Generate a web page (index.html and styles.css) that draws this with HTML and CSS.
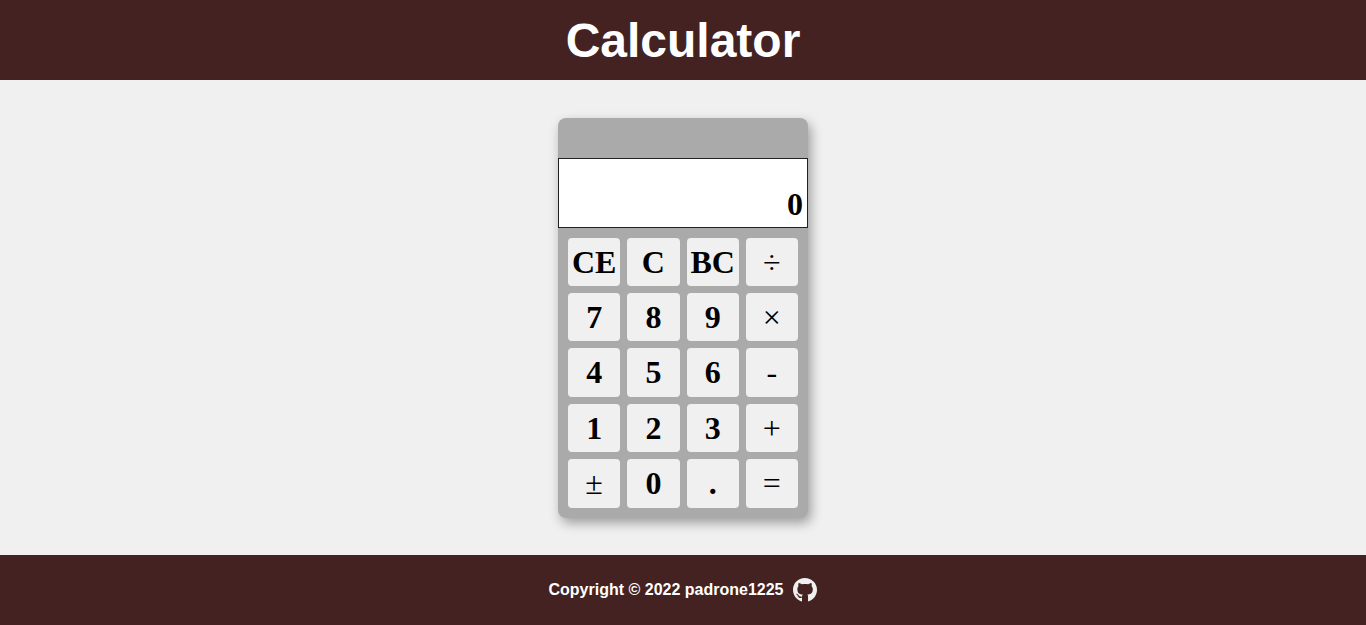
FILE: index.html
```html
<!DOCTYPE html>
<html lang="en">
<head>
<meta charset="utf-8">
<title>Calculator</title>
<link rel="stylesheet" href="styles.css">
</head>
<body>
<header class="header"><h1 class="title">Calculator</h1></header>
<main class="main">
  <section class="calculator" aria-label="Calculator">
    <output class="display">0</output>
    <div class="keys">
      <button class="key">CE</button>
      <button class="key">C</button>
      <button class="key">BC</button>
      <button class="key operator">÷</button>
      <button class="key">7</button>
      <button class="key">8</button>
      <button class="key">9</button>
      <button class="key operator">×</button>
      <button class="key">4</button>
      <button class="key">5</button>
      <button class="key">6</button>
      <button class="key operator">-</button>
      <button class="key">1</button>
      <button class="key">2</button>
      <button class="key">3</button>
      <button class="key operator">+</button>
      <button class="key operator">±</button>
      <button class="key">0</button>
      <button class="key">.</button>
      <button class="key operator">=</button>
    </div>
  </section>
</main>
<footer class="footer">
  <p class="copyright">Copyright © 2022 padrone1225</p>
  <a class="github" href="https://github.com/padrone1225" aria-label="GitHub">
    <svg class="github-icon" viewBox="0 0 496 496" aria-hidden="true"><path fill="currentColor" transform="translate(0 -8)" d="M165.9 397.4c0 2-2.3 3.6-5.2 3.6-3.3.3-5.6-1.3-5.6-3.6 0-2 2.3-3.6 5.2-3.6 3-.3 5.6 1.3 5.6 3.6zm-31.1-4.5c-.7 2 1.3 4.3 4.3 4.9 2.6 1 5.6 0 6.2-2s-1.3-4.3-4.3-5.2c-2.6-.7-5.5.3-6.2 2.3zm44.2-1.7c-2.9.7-4.9 2.6-4.6 4.9.3 2 2.9 3.3 5.9 2.6 2.9-.7 4.9-2.6 4.6-4.6-.3-1.9-3-3.2-5.9-2.9zM244.8 8C106.1 8 0 113.3 0 252c0 110.9 69.8 205.8 169.5 239.2 12.8 2.3 17.3-5.6 17.3-12.1 0-6.2-.3-40.4-.3-61.4 0 0-70 15-84.7-29.8 0 0-11.4-29.1-27.8-36.6 0 0-22.9-15.7 1.6-15.4 0 0 24.9 2 38.6 25.8 21.9 38.6 58.6 27.5 72.9 20.9 2.3-16 8.8-27.1 16-33.7-55.9-6.2-112.3-14.3-112.3-110.5 0-27.5 7.6-41.3 23.6-58.9-2.6-6.5-11.1-33.3 2.6-67.9 20.9-6.5 69 27 69 27 20-5.6 41.5-8.5 62.8-8.5s42.8 2.9 62.8 8.5c0 0 48.1-33.6 69-27 13.7 34.7 5.2 61.4 2.6 67.9 16 17.7 25.8 31.5 25.8 58.9 0 96.5-58.9 104.2-114.8 110.5 9.2 7.9 17 22.9 17 46.4 0 33.7-.3 75.4-.3 83.6 0 6.5 4.6 14.4 17.3 12.1C428.2 457.8 496 362.9 496 252 496 113.3 383.5 8 244.8 8zM97.2 352.9c-1.3 1-1 3.3.7 5.2 1.6 1.6 3.9 2.3 5.2 1 1.3-1 1-3.3-.7-5.2-1.6-1.6-3.9-2.3-5.2-1zm-10.8-8.1c-.7 1.3.3 2.9 2.3 3.9 1.6 1 3.6.7 4.3-.7.7-1.3-.3-2.9-2.3-3.9-2-.6-3.6-.3-4.3.7zm32.4 35.6c-1.6 1.3-1 4.3 1.3 6.2 2.3 2.3 5.2 2.6 6.5 1 1.3-1.3.7-4.3-1.3-6.2-2.2-2.3-5.2-2.6-6.5-1zm-11.4-14.7c-1.6 1-1.6 3.6 0 5.9 1.6 2.3 4.3 3.3 5.6 2.3 1.6-1.3 1.6-3.9 0-6.2-1.4-2.3-4-3.3-5.6-2z"/></svg>
  </a>
</footer>
</body>
</html>
```
FILE: styles.css
```css
* {
  box-sizing: border-box;
  margin: 0;
}

body {
  display: flex;
  flex-direction: column;
  min-height: 100vh;
  background: #f0f0f0;
  font-family: "Liberation Sans", Arial, sans-serif;
}

.header {
  display: flex;
  align-items: center;
  justify-content: center;
  height: 80px;
  background: #442222;
  color: #fff;
}

.title {
  font-size: 48px;
}

.main {
  display: flex;
  flex: 1;
  align-items: center;
  justify-content: center;
}

.calculator {
  display: flex;
  flex-direction: column;
  width: 250px;
  min-height: 400px;
  padding-top: 40px;
  border-radius: 8px;
  background: #aaa;
  box-shadow: 3px 5px 12px rgba(0, 0, 0, 0.35);
  font-family: "Liberation Serif", "Times New Roman", serif;
  font-size: 32px;
  font-weight: bold;
}

.display {
  display: flex;
  align-items: flex-end;
  justify-content: flex-end;
  height: 70px;
  padding: 4px;
  border: 1px solid #222;
  background: #fff;
}

.keys {
  display: grid;
  flex: 1;
  grid-template-columns: repeat(4, 1fr);
  grid-template-rows: repeat(5, 1fr);
  gap: 7px;
  padding: 10px;
}

.key {
  min-width: 0;
  padding: 0;
  border: 0;
  border-radius: 4px;
  background: #f0f0f0;
  color: #000;
  font: inherit;
  line-height: 1;
}

.operator {
  font-weight: normal;
}

.footer {
  display: flex;
  align-items: center;
  justify-content: center;
  gap: 10px;
  height: 70px;
  background: #442222;
  color: #fff;
}

.copyright {
  font-size: 16px;
  font-weight: bold;
}

.github {
  display: flex;
  color: #f0f0f0;
}

.github-icon {
  width: 24px;
  height: 24px;
}
```
